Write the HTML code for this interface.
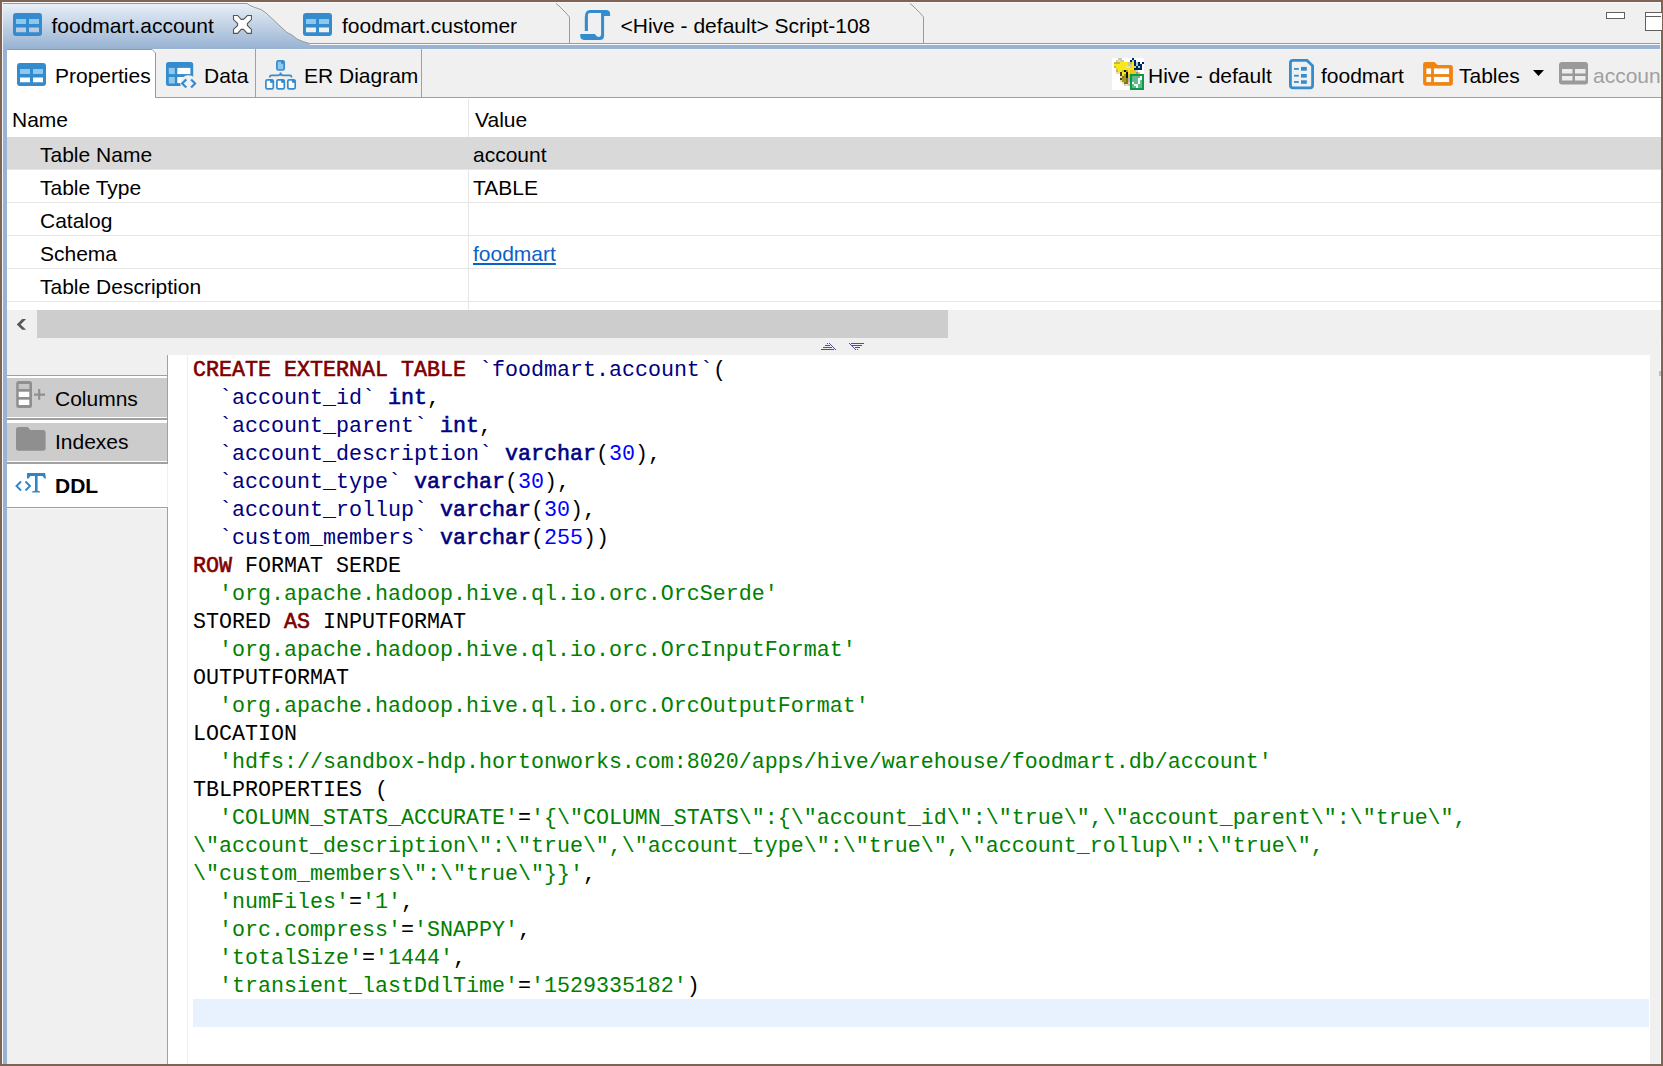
<!DOCTYPE html>
<html><head><meta charset="utf-8">
<style>
*{margin:0;padding:0;box-sizing:border-box}
html,body{width:1663px;height:1066px;overflow:hidden;background:#f0f0f0;font-family:"Liberation Sans",sans-serif;font-size:21px;color:#000}
.a{position:absolute}
svg{position:absolute;overflow:visible}
.t{position:absolute;white-space:pre;line-height:24px;font-size:21px}
.m{position:absolute;left:193px;white-space:pre;font-family:"Liberation Mono",monospace;font-size:21.67px;line-height:28px;color:#000}
.kw{color:#800000;-webkit-text-stroke:0.6px #800000}
.ty{color:#000080;-webkit-text-stroke:0.6px #000080}
.id{color:#000080}
.nu{color:#0000ff}
.st{color:#008000}
</style></head><body>
<!-- outer brown frame -->
<div class="a" style="left:0;top:0;width:1663px;height:2px;background:#7f6354"></div>
<div class="a" style="left:0;top:0;width:2px;height:1066px;background:#7f6354"></div>
<div class="a" style="left:1661px;top:0;width:2px;height:1066px;background:#7f6354"></div>
<div class="a" style="left:0;top:1064px;width:1663px;height:2px;background:#7f6354"></div>
<div class="a" style="left:2px;top:2px;width:1659px;height:1px;background:#f8f8f8"></div>
<div class="a" style="left:2px;top:2px;width:1px;height:1062px;background:#f4f6f9"></div>
<div class="a" style="left:1660px;top:2px;width:1px;height:1062px;background:#f8f8f8"></div>

<!-- left blue strip -->
<div class="a" style="left:3px;top:45px;width:4px;height:1019px;background:#98b3d3"></div>

<!-- top tab bar -->
<div class="a" style="left:310px;top:43px;width:1350px;height:1px;background:#9a9a9a"></div>
<div class="a" style="left:310px;top:44px;width:1350px;height:1px;background:#fafafa"></div>
<div class="a" style="left:3px;top:45px;width:1657px;height:4px;background:#98b3d3"></div>
<svg style="left:3px;top:3px" width="320" height="46">
 <defs><linearGradient id="g1" x1="0" y1="0" x2="0" y2="1">
  <stop offset="0" stop-color="#eaf0f7"/><stop offset="1" stop-color="#97b2d3"/></linearGradient></defs>
 <path d="M0 0 H244 L247 2.5 L252 4.5 L258 6.5 L263 10 L284 29.5 L289 32 L294 36 L300 38.5 L306.5 40.5 H307 V46 H0 Z" fill="url(#g1)"/>
 <path d="M0 0.5 H244 L247 2.5 L252 4.5 L258 6.5 L263 10 L284 29.5 L289 32 L294 36 L300 38.5 L306.5 40.5 H320" fill="none" stroke="#9a9a9a" stroke-width="1"/>
</svg>
<!-- customer / script tab right edges -->
<svg style="left:549px;top:3px" width="30" height="42">
 <path d="M7 0.5 L10 3 L15 8 L17 10 L20.5 14 V40.5" fill="none" stroke="#9a9a9a" stroke-width="1"/>
</svg>
<svg style="left:903px;top:3px" width="30" height="42">
 <path d="M7 0.5 L10 3 L15 8 L17 10 L20.5 14 V40.5" fill="none" stroke="#9a9a9a" stroke-width="1"/>
</svg>

<!-- tab icons -->
<svg style="left:13px;top:13px" width="29" height="23" viewBox="0 0 29 23">
 <path fill-rule="evenodd" fill="#348cce" d="M3 0 H26 Q29 0 29 3 V20 Q29 23 26 23 H3 Q0 23 0 20 V3 Q0 0 3 0 Z M3 14.5 V19.3 H13 V14.5 Z M16 14.5 V19.3 H26 V14.5 Z"/>
 <rect x="3" y="6" width="10" height="5" fill="#8dc9ec"/><rect x="16" y="6" width="10" height="5" fill="#8dc9ec"/>
</svg>
<div class="t" style="left:51.5px;top:14px">foodmart.account</div>
<svg style="left:228px;top:10px" width="30" height="30" viewBox="0 0 30 30">
 <path d="M5.5 5.5 H9.6 L13.2 9.4 H15.5 L19.4 5.5 H23.4 V9.6 L19.4 13.5 V15.5 L23.4 19.4 V23.4 H19.4 L15.5 19.4 H13.2 L9.6 23.4 H5.5 V19.4 L9.6 15.5 V13.5 L5.5 9.6 Z" fill="#fff" stroke="#555" stroke-width="1.1"/>
</svg>
<svg style="left:303px;top:13px" width="29" height="23" viewBox="0 0 29 23">
 <path fill-rule="evenodd" fill="#348cce" d="M3 0 H26 Q29 0 29 3 V20 Q29 23 26 23 H3 Q0 23 0 20 V3 Q0 0 3 0 Z M3 14.5 V19.3 H13 V14.5 Z M16 14.5 V19.3 H26 V14.5 Z"/>
 <rect x="3" y="6" width="10" height="5" fill="#8dc9ec"/><rect x="16" y="6" width="10" height="5" fill="#8dc9ec"/>
</svg>
<div class="t" style="left:342px;top:14px">foodmart.customer</div>
<svg style="left:575px;top:5px" width="40" height="40" viewBox="0 0 40 40">
 <path fill="#348cce" d="M9.8 25.9 V12.5 Q9.8 4.9 15 4.9 H31 Q35.1 4.9 35.1 9 V10.9 H29.1 V30.5 Q29.1 35.1 24.5 35.1 H10 Q5.25 35.1 5.25 31 V28.9 H20 Q21.5 32 23.5 32 Q26.1 32 26.1 29 V8.1 H15 Q12.9 8.1 12.9 10.5 V25.9 Z"/>
</svg>
<div class="t" style="left:620.5px;top:14px">&lt;Hive - default&gt; Script-108</div>

<!-- window min/max -->
<div class="a" style="left:1606px;top:12px;width:19px;height:7px;border:1.5px solid #606060;background:#fff"></div>
<div class="a" style="left:1645px;top:12px;width:17px;height:19px;border:1.5px solid #606060;background:#fff;border-right:none"></div>
<div class="a" style="left:1645px;top:16px;width:16px;height:1px;background:#606060"></div>

<!-- sub tab bar -->
<div class="a" style="left:155px;top:49px;width:1505px;height:1px;background:#f6f6f6"></div>
<div class="a" style="left:7px;top:97px;width:1654px;height:1px;background:#a0a0a0"></div>
<div class="a" style="left:7px;top:50px;width:148px;height:48px;background:#fff"></div>
<svg style="left:7px;top:49px" width="150" height="49">
 <path d="M0 0.5 H145 L148.5 4 V48" fill="none" stroke="#999" stroke-width="1"/>
</svg>
<div class="a" style="left:255px;top:49px;width:1px;height:48px;background:#a0a0a0"></div>
<div class="a" style="left:421px;top:49px;width:1px;height:48px;background:#a0a0a0"></div>

<svg style="left:17px;top:63px" width="29" height="23" viewBox="0 0 29 23">
 <path fill-rule="evenodd" fill="#348cce" d="M3 0 H26 Q29 0 29 3 V20 Q29 23 26 23 H3 Q0 23 0 20 V3 Q0 0 3 0 Z M3 14.5 V19.3 H13 V14.5 Z M16 14.5 V19.3 H26 V14.5 Z"/>
 <rect x="3" y="6" width="10" height="5" fill="#8dc9ec"/><rect x="16" y="6" width="10" height="5" fill="#8dc9ec"/>
</svg>
<div class="t" style="left:55px;top:64px">Properties</div>
<svg style="left:160px;top:55px" width="40" height="40" viewBox="0 0 40 40">
 <rect x="6" y="6.9" width="27.2" height="24.2" rx="2.5" fill="#348cce"/>
 <rect x="8.8" y="12.9" width="6" height="6.2" fill="#8dc9ec"/><rect x="8.8" y="22" width="6" height="6.5" fill="#8dc9ec"/>
 <rect x="17.3" y="12.9" width="13.1" height="6.2" fill="#fff"/><rect x="17.3" y="22" width="10" height="6.1" fill="#fff"/>
 <circle cx="28.5" cy="28.5" r="8.3" fill="#f0f0f0"/>
 <path d="M26.3 24.4 L22.2 28.5 L26.3 32.5 M31.1 24.4 L35.1 28.5 L31.1 32.5" fill="none" stroke="#348cce" stroke-width="2.2"/>
</svg>
<div class="t" style="left:204px;top:64px">Data</div>
<svg style="left:260px;top:55px" width="40" height="40" viewBox="0 0 40 40">
 <g stroke="#348cce" stroke-width="1.7">
 <rect x="16.9" y="5.9" width="7.3" height="9.1" rx="1.5" fill="#8dc9ec"/>
 <rect x="5.9" y="24.8" width="7.4" height="9.1" rx="1.5" fill="#fff"/>
 <rect x="16.9" y="24.8" width="7.4" height="9.1" rx="1.5" fill="#fff"/>
 <rect x="27.8" y="24.8" width="7.4" height="9.1" rx="1.5" fill="#fff"/>
 <path d="M9.8 22.6 V21.8 Q9.8 20.3 11.5 20.3 H18.3 Q20.6 20.3 20.6 17.6 Q20.6 20.3 22.9 20.3 H29.8 Q31.5 20.3 31.5 21.8 V22.6" fill="none"/>
 </g>
 <rect x="21" y="6" width="3.2" height="2.8" fill="#348cce"/>
 <rect x="10.1" y="25" width="3.2" height="2.8" fill="#348cce"/><rect x="21.1" y="25" width="3.2" height="2.8" fill="#348cce"/><rect x="32" y="25" width="3.2" height="2.8" fill="#348cce"/>
</svg>
<div class="t" style="left:304px;top:64px">ER Diagram</div>

<!-- right toolbar -->
<svg style="left:1112px;top:58px" width="32" height="32" viewBox="0 0 16 16" shape-rendering="crispEdges">
 <rect x="0" y="0" width="16" height="16" fill="#fff"/>
 <path fill="#c8c8b8" d="M3 0h1v1h-1zM4 0h1v1h-1zM2 1h1v1h-1zM4 1h1v1h-1zM5 1h1v1h-1zM9 3h1v1h-1zM9 4h1v1h-1z"/>
 <path fill="#002070" d="M10 0h1v1h-1zM9 1h1v1h-1zM11 1h1v1h-1zM11 2h1v1h-1zM13 2h1v1h-1zM15 2h1v1h-1zM11 3h1v1h-1zM13 3h1v1h-1zM14 3h1v1h-1zM12 4h1v1h-1zM14 4h1v1h-1zM11 5h1v1h-1zM12 5h1v1h-1zM13 5h1v1h-1zM14 5h1v1h-1z"/>
 <path fill="#e8e0a8" d="M3 1h1v1h-1zM7 4h1v1h-1zM8 4h1v1h-1zM2 7h1v1h-1zM3 7h1v1h-1zM4 9h1v1h-1zM4 11h1v1h-1zM5 12h1v1h-1zM7 13h1v1h-1z"/>
 <path fill="#90e0b0" d="M10 1h1v1h-1zM12 2h1v1h-1zM12 3h1v1h-1zM13 4h1v1h-1z"/>
 <path fill="#c8b840" d="M1 2h1v1h-1zM2 2h1v1h-1zM3 2h1v1h-1zM9 2h1v1h-1zM1 4h1v1h-1zM2 6h1v1h-1zM5 6h1v1h-1z"/>
 <path fill="#f8e818" d="M4 2h1v1h-1zM5 2h1v1h-1zM6 2h1v1h-1zM7 2h1v1h-1zM10 2h1v1h-1zM1 3h1v1h-1zM2 3h1v1h-1zM3 3h1v1h-1zM4 3h1v1h-1zM5 3h1v1h-1zM6 3h1v1h-1zM7 3h1v1h-1zM10 3h1v1h-1zM2 4h1v1h-1zM3 4h1v1h-1zM4 4h1v1h-1zM5 4h1v1h-1zM6 4h1v1h-1zM10 4h1v1h-1zM3 5h1v1h-1zM4 5h1v1h-1zM5 5h1v1h-1zM6 5h1v1h-1zM7 5h1v1h-1zM8 5h1v1h-1zM9 5h1v1h-1zM10 5h1v1h-1zM3 6h1v1h-1zM4 6h1v1h-1zM8 6h1v1h-1zM5 7h1v1h-1zM6 7h1v1h-1zM8 7h1v1h-1zM5 8h1v1h-1z"/>
 <path fill="#d8cc70" d="M8 2h1v1h-1zM8 3h1v1h-1zM11 4h1v1h-1zM2 5h1v1h-1zM13 7h1v1h-1z"/>
 <path fill="#101010" d="M6 6h1v1h-1zM7 7h1v1h-1zM7 8h1v1h-1zM7 9h1v1h-1z"/>
 <path fill="#a89a20" d="M7 6h1v1h-1zM6 8h1v1h-1zM6 9h1v1h-1zM5 10h1v1h-1zM6 10h1v1h-1zM5 11h1v1h-1zM6 11h1v1h-1z"/>
 <path fill="#e8c820" d="M9 6h1v1h-1zM10 6h1v1h-1zM11 6h1v1h-1zM9 7h1v1h-1zM10 7h1v1h-1zM11 7h1v1h-1zM8 8h1v1h-1zM8 9h1v1h-1z"/>
 <path fill="#d8d0e0" d="M12 6h1v1h-1zM8 12h1v1h-1zM6 13h1v1h-1z"/>
 <path fill="#404030" d="M4 7h1v1h-1zM4 8h1v1h-1zM4 10h1v1h-1z"/>
 <path fill="#a09070" d="M12 7h1v1h-1z"/>
 <path fill="#807810" d="M5 9h1v1h-1zM7 10h1v1h-1zM7 11h1v1h-1zM6 12h1v1h-1zM7 12h1v1h-1z"/>
 <path fill="#b8b0c8" d="M8 10h1v1h-1zM8 11h1v1h-1z"/>
 <path fill="#d8c890" d="M8 13h1v1h-1z"/>
 <rect x="9" y="8" width="7" height="8" fill="#0a9a48"/>
 <rect x="10" y="9" width="5" height="6" fill="#62bb8a"/>
 <path d="M14 9h1v1h-1z M13 10h2v1h-2z M13 11h1v2h-1z M10 12h1v1h-1z M11 13h2v1h-2z M12 14h1v1h-1z" fill="#fff"/>
</svg>
<div class="t" style="left:1148px;top:64px">Hive - default</div>
<svg style="left:1283px;top:54px" width="40" height="40" viewBox="0 0 40 40">
 <path d="M7.4 9 Q7.4 6.4 10 6.4 H24 L29.6 11.8 V31.3 Q29.6 33.9 27 33.9 H10 Q7.4 33.9 7.4 31.3 Z" fill="none" stroke="#348cce" stroke-width="2.8"/>
 <rect x="11" y="14" width="4.8" height="1.8" fill="#348cce"/><rect x="18" y="12.9" width="5.8" height="3.8" fill="#348cce"/>
 <rect x="11" y="20.8" width="4.8" height="1.8" fill="#348cce"/><rect x="18" y="20" width="5.8" height="3.6" fill="#348cce"/>
 <rect x="11" y="27.1" width="4.8" height="1.8" fill="#348cce"/><rect x="18" y="26.3" width="5.8" height="3.5" fill="#348cce"/>
</svg>
<div class="t" style="left:1321px;top:64px">foodmart</div>
<svg style="left:1418px;top:54px" width="40" height="40" viewBox="0 0 40 40">
 <path fill="#f08410" d="M7.5 7.9 H16.5 L19.5 10.9 H32.5 Q34.9 10.9 34.9 13.3 V29.3 Q34.9 31.7 32.5 31.7 H7.5 Q5.1 31.7 5.1 29.3 V10.3 Q5.1 7.9 7.5 7.9 Z"/>
 <rect x="8.4" y="14.4" width="4.7" height="5.7" fill="#fff"/><rect x="15.9" y="14.4" width="15.2" height="5.7" fill="#fff"/>
 <rect x="8.4" y="22.9" width="4.7" height="5.2" fill="#fff"/><rect x="15.9" y="22.9" width="15.2" height="5.2" fill="#fff"/>
</svg>
<div class="t" style="left:1459px;top:64px">Tables</div>
<svg style="left:1532px;top:70px" width="14" height="8" viewBox="0 0 14 8"><path d="M1 0 H12 L6.5 6 Z" fill="#000"/></svg>
<svg style="left:1559px;top:62px" width="29" height="23" viewBox="0 0 29 23">
 <rect x="0" y="0" width="29" height="22.5" rx="3" fill="#9a9a9a"/>
 <rect x="3" y="7" width="10.5" height="4.5" fill="#ececec"/><rect x="16" y="7" width="10.5" height="4.5" fill="#ececec"/>
 <rect x="3" y="14" width="10.5" height="4.5" fill="#ececec"/><rect x="16" y="14" width="10.5" height="4.5" fill="#ececec"/>
</svg>
<div class="a" style="left:1592px;top:55px;width:68px;height:40px;overflow:hidden"><div class="t" style="left:1px;top:9px;color:#a0a0a0">account</div></div>

<!-- properties table -->
<div class="a" style="left:7px;top:98px;width:1654px;height:212px;background:#fff"></div>
<div class="a" style="left:468px;top:99px;width:1px;height:211px;background:#e6e6e6"></div>
<div class="t" style="left:12px;top:108px">Name</div>
<div class="t" style="left:475px;top:108px">Value</div>
<div class="a" style="left:7px;top:137px;width:1654px;height:33px;background:#d9d9d9"></div>
<div class="a" style="left:7px;top:202px;width:1654px;height:1px;background:#e6e6e6"></div>
<div class="a" style="left:7px;top:235px;width:1654px;height:1px;background:#e6e6e6"></div>
<div class="a" style="left:7px;top:268px;width:1654px;height:1px;background:#e6e6e6"></div>
<div class="a" style="left:7px;top:301px;width:1654px;height:1px;background:#e6e6e6"></div>
<div class="a" style="left:7px;top:169px;width:1654px;height:1px;background:#e6e6e6"></div>
<div class="t" style="left:40px;top:143px">Table Name</div>
<div class="t" style="left:473px;top:143px">account</div>
<div class="t" style="left:40px;top:176px">Table Type</div>
<div class="t" style="left:473px;top:176px">TABLE</div>
<div class="t" style="left:40px;top:209px">Catalog</div>
<div class="t" style="left:40px;top:242px">Schema</div>
<div class="t" style="left:473px;top:242px;color:#0a62c4;text-decoration:underline">foodmart</div>
<div class="t" style="left:40px;top:275px">Table Description</div>

<!-- hscroll -->
<div class="a" style="left:7px;top:310px;width:1654px;height:28px;background:#f0f0f0"></div>
<div class="a" style="left:37px;top:310px;width:911px;height:28px;background:#cdcdcd"></div>
<svg style="left:10px;top:312px" width="24" height="24" viewBox="0 0 24 24"><path d="M12.2 7 H16.1 L10.6 12.5 L16.1 17.8 H12.2 L6.75 12.5 Z" fill="#585858"/></svg>

<!-- splitter arrows -->
<svg style="left:818px;top:340px" width="50" height="14" viewBox="0 0 50 14">
 <g fill="none" stroke="#4d5096" stroke-width="1">
 <path d="M7 5.5 H12 M5 7.5 H14 M3 9.5 H16 M11 3 L18 10"/>
 <path d="M9 3.5 h1"/>
 <path d="M33 3.5 H46 M34 5.5 H44 M37 7.5 H42 M31 3 L38 10 M39 9.5 h1"/>
 </g>
</svg>

<!-- left panel -->
<div class="a" style="left:167px;top:355px;width:1px;height:109px;background:#a0a0a0"></div>
<div class="a" style="left:167px;top:507px;width:1px;height:557px;background:#a0a0a0"></div>
<div class="a" style="left:7px;top:375px;width:160px;height:1px;background:#a0a0a0"></div>
<div class="a" style="left:7px;top:376px;width:160px;height:2px;background:#fff"></div>
<div class="a" style="left:7px;top:378px;width:160px;height:39px;background:#cccccc"></div>
<div class="a" style="left:7px;top:417px;width:160px;height:1px;background:#fff"></div>
<div class="a" style="left:7px;top:418px;width:160px;height:2px;background:#a0a0a0"></div>
<div class="a" style="left:7px;top:420px;width:160px;height:3px;background:#fff"></div>
<div class="a" style="left:7px;top:423px;width:160px;height:38px;background:#cccccc"></div>
<div class="a" style="left:7px;top:461px;width:160px;height:1px;background:#fff"></div>
<div class="a" style="left:7px;top:462px;width:160px;height:2px;background:#a0a0a0"></div>
<div class="a" style="left:7px;top:464px;width:160px;height:43px;background:#fff"></div>
<div class="a" style="left:7px;top:507px;width:160px;height:1px;background:#a0a0a0"></div>
<div class="a" style="left:7px;top:508px;width:160px;height:1px;background:#fafafa"></div>
<svg style="left:10px;top:376px" width="40" height="40" viewBox="0 0 40 40">
 <path fill-rule="evenodd" fill="#8f8f8f" d="M8.8 5.1 H19.5 Q22 5.1 22 7.6 V29.4 Q22 31.9 19.5 31.9 H8.8 Q6.2 31.9 6.2 29.4 V7.6 Q6.2 5.1 8.8 5.1 Z M8.8 8 V13 H19.2 V8 Z M8.8 15.8 V21 H19.2 V15.8 Z M8.8 23.8 V29 H19.2 V23.8 Z"/>
 <rect x="8.8" y="8" width="10.4" height="5" fill="#c6c6c6"/>
 <rect x="8.8" y="15.8" width="10.4" height="5.2" fill="#fff"/><rect x="8.8" y="23.8" width="10.4" height="5.2" fill="#fff"/>
 <path d="M24 18.6 H35 M29.2 13 V23.8" stroke="#8f8f8f" stroke-width="2.1"/>
</svg>
<div class="t" style="left:55px;top:387px">Columns</div>
<svg style="left:10px;top:420px" width="40" height="40" viewBox="0 0 40 40">
 <path fill="#8f8f8f" d="M8.5 7 H17.6 L20.3 10 H33 Q35.6 10 35.6 12.5 V28.3 Q35.6 30.8 33 30.8 H8.5 Q6 30.8 6 28.3 V9.5 Q6 7 8.5 7 Z"/>
</svg>
<div class="t" style="left:55px;top:430px">Indexes</div>
<svg style="left:10px;top:466px" width="40" height="40" viewBox="0 0 40 40">
 <path d="M11 15.5 L6.5 20 L11 24.5 M15.5 15.5 L20 20 L15.5 24.5" fill="none" stroke="#2e86c8" stroke-width="1.9"/>
 <path fill="#2e86c8" d="M17 7.1 H35.1 L36 12.4 L34.5 12.6 L32.5 9.9 H27.6 V24.8 L30 25.5 V26.6 H22.1 V25.5 L25 24.8 V9.9 H20.5 L18.5 12.6 L17 12.4 Z"/>
</svg>
<div class="t" style="left:55px;top:474px;font-weight:bold">DDL</div>

<!-- editor -->
<div class="a" style="left:168px;top:355px;width:1482px;height:709px;background:#fff"></div>
<div class="a" style="left:187px;top:355px;width:1px;height:709px;background:#efefef"></div>
<div class="a" style="left:193px;top:999px;width:1456px;height:28px;background:#e8f2fe"></div>

<div class="m" style="top:357px"><span class="kw">CREATE</span> <span class="kw">EXTERNAL</span> <span class="kw">TABLE</span> <span class="id">`foodmart.account`</span>(
  <span class="id">`account_id`</span> <span class="ty">int</span>,
  <span class="id">`account_parent`</span> <span class="ty">int</span>,
  <span class="id">`account_description`</span> <span class="ty">varchar</span>(<span class="nu">30</span>),
  <span class="id">`account_type`</span> <span class="ty">varchar</span>(<span class="nu">30</span>),
  <span class="id">`account_rollup`</span> <span class="ty">varchar</span>(<span class="nu">30</span>),
  <span class="id">`custom_members`</span> <span class="ty">varchar</span>(<span class="nu">255</span>))
<span class="kw">ROW</span> FORMAT SERDE
  <span class="st">'org.apache.hadoop.hive.ql.io.orc.OrcSerde'</span>
STORED <span class="kw">AS</span> INPUTFORMAT
  <span class="st">'org.apache.hadoop.hive.ql.io.orc.OrcInputFormat'</span>
OUTPUTFORMAT
  <span class="st">'org.apache.hadoop.hive.ql.io.orc.OrcOutputFormat'</span>
LOCATION
  <span class="st">'hdfs://sandbox-hdp.hortonworks.com:8020/apps/hive/warehouse/foodmart.db/account'</span>
TBLPROPERTIES (
  <span class="st">'COLUMN_STATS_ACCURATE'</span>=<span class="st">'{\"COLUMN_STATS\":{\"account_id\":\"true\",\"account_parent\":\"true\",
\"account_description\":\"true\",\"account_type\":\"true\",\"account_rollup\":\"true\",
\"custom_members\":\"true\"}}'</span>,
  <span class="st">'numFiles'</span>=<span class="st">'1'</span>,
  <span class="st">'orc.compress'</span>=<span class="st">'SNAPPY'</span>,
  <span class="st">'totalSize'</span>=<span class="st">'1444'</span>,
  <span class="st">'transient_lastDdlTime'</span>=<span class="st">'1529335182'</span>)
</div>
<div class="a" style="left:1659px;top:371px;width:2px;height:5px;background:#c4c4c4"></div>
</body></html>
